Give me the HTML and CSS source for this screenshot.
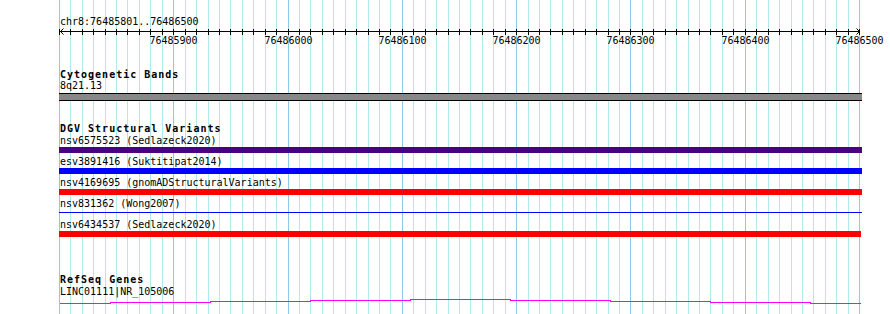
FILE: index.html
```html
<!DOCTYPE html>
<html lang="en">
<head>
    <meta charset="UTF-8">
    <meta name="viewport" content="width=device-width, initial-scale=1.0">
    <title>chr8:76485801..76486500</title>
    <link rel="stylesheet" href="styles.css">
</head>
<body>
    <div class="browser">
        <!-- background grid, one line every 10 bp -->
        <svg class="grid" id="grid" width="890" height="314"></svg>

        <div class="ruler">
            <div class="locus">chr8:76485801..76486500</div>
            <svg class="scale" id="scale" width="890" height="23"></svg>
        </div>

        <section class="track cyto">
            <h2 class="track-title">Cytogenetic Bands</h2>
            <div class="feature-label">8q21.13</div>
            <div class="band"></div>
        </section>

        <section class="track dgv">
            <h2 class="track-title">DGV Structural Variants</h2>
            <div class="row">
                <div class="feature-label">nsv6575523 (Sedlazeck2020)</div>
                <div class="bar indigo"></div>
            </div>
            <div class="row">
                <div class="feature-label">esv3891416 (Suktitipat2014)</div>
                <div class="bar blue"></div>
            </div>
            <div class="row">
                <div class="feature-label">nsv4169695 (gnomADStructuralVariants)</div>
                <div class="bar red"></div>
            </div>
            <div class="row">
                <div class="feature-label">nsv831362 (Wong2007)</div>
                <div class="bar thin"></div>
            </div>
            <div class="row">
                <div class="feature-label">nsv6434537 (Sedlazeck2020)</div>
                <div class="bar red short"></div>
            </div>
        </section>

        <section class="track refseq">
            <h2 class="track-title">RefSeq Genes</h2>
            <div class="feature-label">LINC01111|NR_105006</div>
            <svg class="gene" width="890" height="8">
                <polyline points="60,6.5 110,6.5 110,5.5 210,5.5 210,4.5 310,4.5 310,3.5 410,3.5 410,2.5 510,2.5 510,3.5 610,3.5 610,4.5 710,4.5 710,5.5 810,5.5 810,6.5 861,6.5"/>
            </svg>
        </section>
    </div>

    <script>
        const viewStart = 76485801;
        const viewEnd = 76486500;
        const gridStart = 76485800;
        const leftPx = 59.4;
        const pxPerBp = 800.2 / 700;
        const svgNs = 'http://www.w3.org/2000/svg';

        function xOf(bp) {
            return Math.floor(leftPx + (bp - gridStart) * pxPerBp) + 0.5;
        }

        function addLine(svg, x1, y1, x2, y2, cls) {
            const line = document.createElementNS(svgNs, 'line');
            line.setAttribute('x1', x1);
            line.setAttribute('y1', y1);
            line.setAttribute('x2', x2);
            line.setAttribute('y2', y2);
            line.setAttribute('class', cls);
            svg.appendChild(line);
        }

        function drawGrid() {
            const grid = document.getElementById('grid');
            const scale = document.getElementById('scale');

            addLine(scale, 60, 4.5, 860, 4.5, 'axis');

            for (let bp = gridStart; bp <= viewEnd; bp += 10) {
                const x = xOf(bp);
                const major = bp % 100 === 0;
                addLine(grid, x, 0, x, 314, major ? 'major' : 'minor');
                addLine(scale, x, 2, x, 8, 'tick');

                if (major && bp > viewStart) {
                    const label = document.createElementNS(svgNs, 'text');
                    label.setAttribute('x', x);
                    label.setAttribute('y', 17);
                    label.setAttribute('class', 'tick-label');
                    label.textContent = bp;
                    scale.appendChild(label);
                }
            }

            const arrows = document.createElementNS(svgNs, 'path');
            arrows.setAttribute('d', 'M63.5 1.5 L60.5 4.5 L63.5 7.5 M856.5 1.5 L859.5 4.5 L856.5 7.5');
            arrows.setAttribute('class', 'arrow');
            scale.appendChild(arrows);
        }

        drawGrid();
    </script>
</body>
</html>
```

FILE: styles.css
```css
body {
    margin: 0;
    background-color: #fff;
    color: #000;
    font-family: "DejaVu Sans Mono", "Liberation Mono", monospace;
    font-size: 10px;
    line-height: 11px;
    overflow: hidden;
}

.browser {
    position: relative;
    z-index: 0;
    width: 890px;
    height: 314px;
}

/* Grid lines behind everything */
.grid {
    position: absolute;
    top: 0;
    left: 0;
    z-index: -1;
    shape-rendering: crispEdges;
}

.grid .minor {
    stroke: #aeeaee;
    stroke-width: 1;
}

.grid .major {
    stroke: #8ccae8;
    stroke-width: 1;
}

/* Ruler */
.ruler {
    padding-top: 16px;
}

.locus {
    padding-left: 60px;
}

.scale {
    display: block;
}

.scale .axis,
.scale .tick {
    stroke: #000;
    stroke-width: 1;
    shape-rendering: crispEdges;
}

.scale .arrow {
    fill: none;
    stroke: #000;
    stroke-width: 1;
}

.tick-label {
    font-family: "DejaVu Sans Mono", "Liberation Mono", monospace;
    font-size: 10px;
    text-anchor: middle;
    fill: #000;
}

/* Tracks */
.track {
    margin-left: 59px;
    width: 803px;
}

.track-title {
    margin: 0;
    padding-left: 1px;
    font-size: 10px;
    font-weight: bold;
    letter-spacing: 1px;
    line-height: 11px;
}

.feature-label {
    padding-left: 1px;
    white-space: nowrap;
}

.cyto {
    margin-top: 19px;
}

.band {
    margin-top: 2px;
    height: 6px;
    background-color: #888;
    border-top: 1px solid #000;
    border-bottom: 1px solid #000;
}

.dgv {
    margin-top: 22px;
}

.dgv .track-title {
    margin-bottom: 1px;
}

.row {
    padding-bottom: 3px;
}

.bar {
    margin-top: 1px;
    height: 6px;
}

.bar.indigo {
    background-color: #4b0082;
}

.bar.blue {
    background-color: #0000ff;
}

.bar.red {
    background-color: #ff0000;
}

.bar.short {
    width: 802px;
}

.bar.thin {
    background: linear-gradient(transparent 2px, #0000ff 2px, #0000ff 3px, transparent 3px);
}

.refseq {
    margin-top: 34px;
}

.refseq .feature-label {
    margin-top: 1px;
}

.gene {
    display: block;
    margin-left: -59px;
}

.gene polyline {
    fill: none;
    stroke: #ff00ff;
    stroke-width: 1;
    shape-rendering: crispEdges;
}
```
